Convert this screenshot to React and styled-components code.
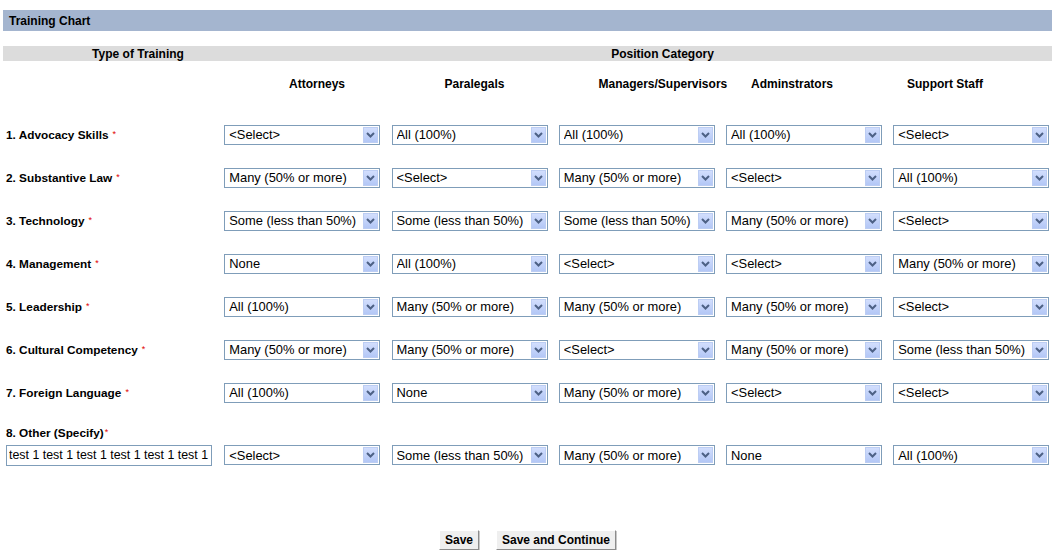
import React from "react";
import styled, { createGlobalStyle } from "styled-components";

const OPTIONS = ["<Select>", "All (100%)", "Many (50% or more)", "Some (less than 50%)", "None"];
const S = "<Select>";
const ALL = "All (100%)";
const MANY = "Many (50% or more)";
const SOME = "Some (less than 50%)";
const NONE = "None";

const HEADS = [
  { label: "Attorneys", ml: 250 },
  { label: "Paralegals", ml: 29.5 },
  { label: "Managers/Supervisors", ml: 60 },
  { label: "Adminstrators", ml: 1.5 },
  { label: "Support Staff", ml: 25 },
];

const ROWS = [
  { label: "1. Advocacy Skills", values: [S, ALL, ALL, ALL, S] },
  { label: "2. Substantive Law", values: [MANY, S, MANY, S, ALL] },
  { label: "3. Technology", values: [SOME, SOME, SOME, MANY, S] },
  { label: "4. Management", values: [NONE, ALL, S, S, MANY] },
  { label: "5. Leadership", values: [ALL, MANY, MANY, MANY, S] },
  { label: "6. Cultural Competency", values: [MANY, MANY, S, MANY, SOME] },
  { label: "7. Foreign Language", values: [ALL, NONE, MANY, S, S] },
];

const OTHER_VALUES = [S, SOME, MANY, NONE, ALL];

const GlobalStyle = createGlobalStyle`
  body {
    margin: 0;
    background: #ffffff;
    font-family: "Liberation Sans", Arial, sans-serif;
    color: #000000;
  }
`;

const Page = styled.div`
  width: 1049px;
  padding: 10px 5px 0 3px;
`;

const TitleBar = styled.div`
  height: 21px;
  background-color: #a4b5cf;
  display: flex;
  align-items: center;
  padding-left: 6px;
  font-size: 12px;
  font-weight: 700;
`;

const CategoryBar = styled.div`
  margin-top: 15px;
  height: 15px;
  background-color: #dcdcdc;
  display: grid;
  grid-template-columns: 270px 1fr;
  align-items: center;
  font-size: 12px;
  font-weight: 700;
  text-align: center;
`;

const HeadRow = styled.div`
  height: 46px;
  display: flex;
  align-items: center;
`;

const HeadCell = styled.div`
  width: 128px;
  flex: none;
  margin-left: ${(p) => p.$ml}px;
  text-align: center;
  font-size: 12px;
  font-weight: 700;
  white-space: nowrap;
`;

const Rows = styled.div`
  margin-top: 6px;
`;

const Row = styled.div`
  display: grid;
  grid-template-columns: 210px repeat(5, 156px);
  column-gap: 11.25px;
  align-items: center;
  height: ${(p) => p.$h}px;
`;

const Label = styled.div`
  padding-left: 3px;
  font-size: 11.8px;
  font-weight: 700;
  white-space: nowrap;
`;

const OtherLabel = styled(Label)`
  padding-top: 11px;
  height: 14px;
  line-height: 14px;
  margin-bottom: 5px;
`;

const Req = styled.span`
  color: #e00000;
  font-size: 9px;
  font-weight: 400;
  vertical-align: 2px;
  margin-left: ${(p) => (p.$tight ? 1 : 4)}px;
`;

const SelectBox = styled.div`
  position: relative;
  width: 156px;
  height: 20px;
`;

const NativeSelect = styled.select`
  appearance: none;
  -webkit-appearance: none;
  box-sizing: border-box;
  width: 100%;
  height: 100%;
  margin: 0;
  border: 1px solid #7f9db9;
  border-radius: 0;
  background: #ffffff;
  padding: 0 0 0 4px;
  font-family: "Liberation Sans", Arial, sans-serif;
  font-size: 12.9px;
  color: #000000;
  outline: none;
`;

const ArrowBtn = styled.span`
  position: absolute;
  top: 2px;
  right: 2px;
  width: 15px;
  height: 16px;
  box-sizing: border-box;
  border: 1px solid #bccdf3;
  background: linear-gradient(#d2defd, #b3c7f6);
  display: flex;
  align-items: center;
  justify-content: center;
  pointer-events: none;
`;

const TextBox = styled.input`
  box-sizing: border-box;
  margin: 0 0 0 3px;
  width: 206px;
  height: 21px;
  border: 1px solid #7f9db9;
  padding: 0 0 0 2px;
  font-family: "Liberation Sans", Arial, sans-serif;
  font-size: 12.4px;
  color: #000000;
  outline: none;
`;

const Buttons = styled.div`
  margin-top: 64px;
  display: flex;
  justify-content: center;
  gap: 17px;
`;

const Button = styled.button`
  height: 20px;
  padding: 0 5px;
  margin: 0;
  background: #efefef;
  border: 1px solid;
  border-color: #ffffff #8c8c8c #8c8c8c #ffffff;
  box-shadow: 1px 1px 0 #c8c8c8;
  border-radius: 0;
  font-family: "Liberation Sans", Arial, sans-serif;
  font-size: 12px;
  font-weight: 700;
  color: #000000;
  cursor: pointer;
`;

function Chevron() {
  return (
    <svg width="9" height="6" viewBox="0 0 9 6">
      <path d="M1 1 L4.5 4.5 L8 1" fill="none" stroke="#4d6185" strokeWidth="2" />
    </svg>
  );
}

function Dropdown({ value }) {
  return (
    <SelectBox>
      <NativeSelect defaultValue={value}>
        {OPTIONS.map((o) => (
          <option key={o} value={o}>
            {o}
          </option>
        ))}
      </NativeSelect>
      <ArrowBtn>
        <Chevron />
      </ArrowBtn>
    </SelectBox>
  );
}

export default function App() {
  return (
    <Page>
      <GlobalStyle />
      <TitleBar>Training Chart</TitleBar>
      <CategoryBar>
        <span>Type of Training</span>
        <span>Position Category</span>
      </CategoryBar>
      <HeadRow>
        {HEADS.map((h) => (
          <HeadCell key={h.label} $ml={h.ml}>
            {h.label}
          </HeadCell>
        ))}
      </HeadRow>
      <Rows>
        {ROWS.map((r) => (
          <Row key={r.label} $h={43}>
            <Label>
              {r.label}
              <Req>*</Req>
            </Label>
            {r.values.map((v, i) => (
              <Dropdown key={i} value={v} />
            ))}
          </Row>
        ))}
        <OtherLabel>
          8. Other (Specify)
          <Req $tight>*</Req>
        </OtherLabel>
        <Row $h={22}>
          <TextBox type="text" defaultValue="test 1 test 1 test 1 test 1 test 1 test 1" />
          {OTHER_VALUES.map((v, i) => (
            <Dropdown key={i} value={v} />
          ))}
        </Row>
      </Rows>
      <Buttons>
        <Button type="button">Save</Button>
        <Button type="button">Save and Continue</Button>
      </Buttons>
    </Page>
  );
}
